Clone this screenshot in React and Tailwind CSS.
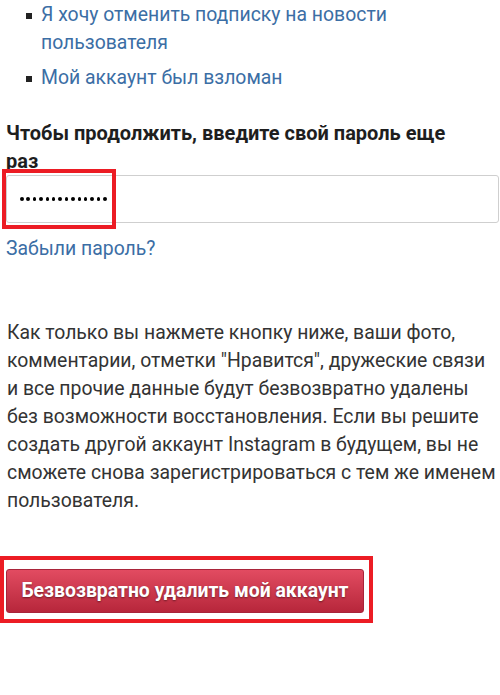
import React from "react";

function App() {
  const dots = Array.from({ length: 14 });

  return (
    <div
      className="min-h-[695px] bg-white text-[19.4px] leading-[28px] text-[#262626]"
      style={{ fontFamily: "Roboto, 'Liberation Sans', sans-serif" }}
    >
      <ul className="pt-px pl-[41px] pr-[20px] flex flex-col gap-[7px]">
        <li className="relative">
          <span className="absolute left-[-15px] top-[12px] w-[6px] h-[6px] bg-[#222]" />
          <a className="text-[#3b6ea5]">
            Я хочу отменить подписку на новости пользователя
          </a>
        </li>
        <li className="relative">
          <span className="absolute left-[-15px] top-[12px] w-[6px] h-[6px] bg-[#222]" />
          <a className="text-[#3b6ea5]">Мой аккаунт был взломан</a>
        </li>
      </ul>

      <form className="pl-[6px] pr-px mt-[27px]">
        <label className="block font-bold text-[20px] text-[#1e1e1e] max-w-[462px]">
          Чтобы продолжить, введите свой пароль еще раз
        </label>
        <div className="relative">
          {/* masked password field */}
          <div className="flex items-center gap-[2.9px] w-full h-[48px] pl-[13px] border border-[#cfcfcf] rounded-[3px] bg-white">
            {dots.map((_, i) => (
              <span key={i} className="w-[3.5px] h-[3.5px] rounded-full bg-black" />
            ))}
          </div>
          {/* red highlight mark */}
          <div className="absolute left-[-4px] top-[-6px] w-[114px] h-[60px] border-4 border-[#ec1c24]" />
        </div>
        <a className="block mt-[12px] text-[#3b6ea5]">Забыли пароль?</a>

        <p className="mt-[56px] pl-px text-[#333]">
          Как только вы нажмете кнопку ниже, ваши фото, комментарии, отметки
          "Нравится", дружеские связи и все прочие данные будут безвозвратно
          удалены без возможности восстановления. Если вы решите создать другой
          аккаунт Instagram в будущем, вы не сможете снова зарегистрироваться с
          тем же именем пользователя.
        </p>

        <div className="relative mt-[54px] w-[358px]">
          <button
            type="button"
            className="h-[44px] w-full rounded-[3px] border border-[#a9243a] bg-gradient-to-b from-[#e24b61] to-[#b7263b] text-white font-bold [text-shadow:0_1px_2px_rgba(0,0,0,0.45)]"
          >
            Безвозвратно удалить мой аккаунт
          </button>
          {/* red highlight mark */}
          <div className="absolute left-[-6px] top-[-13px] w-[373px] h-[67px] border-4 border-[#ec1c24]" />
        </div>
      </form>
    </div>
  );
}

export default App;
